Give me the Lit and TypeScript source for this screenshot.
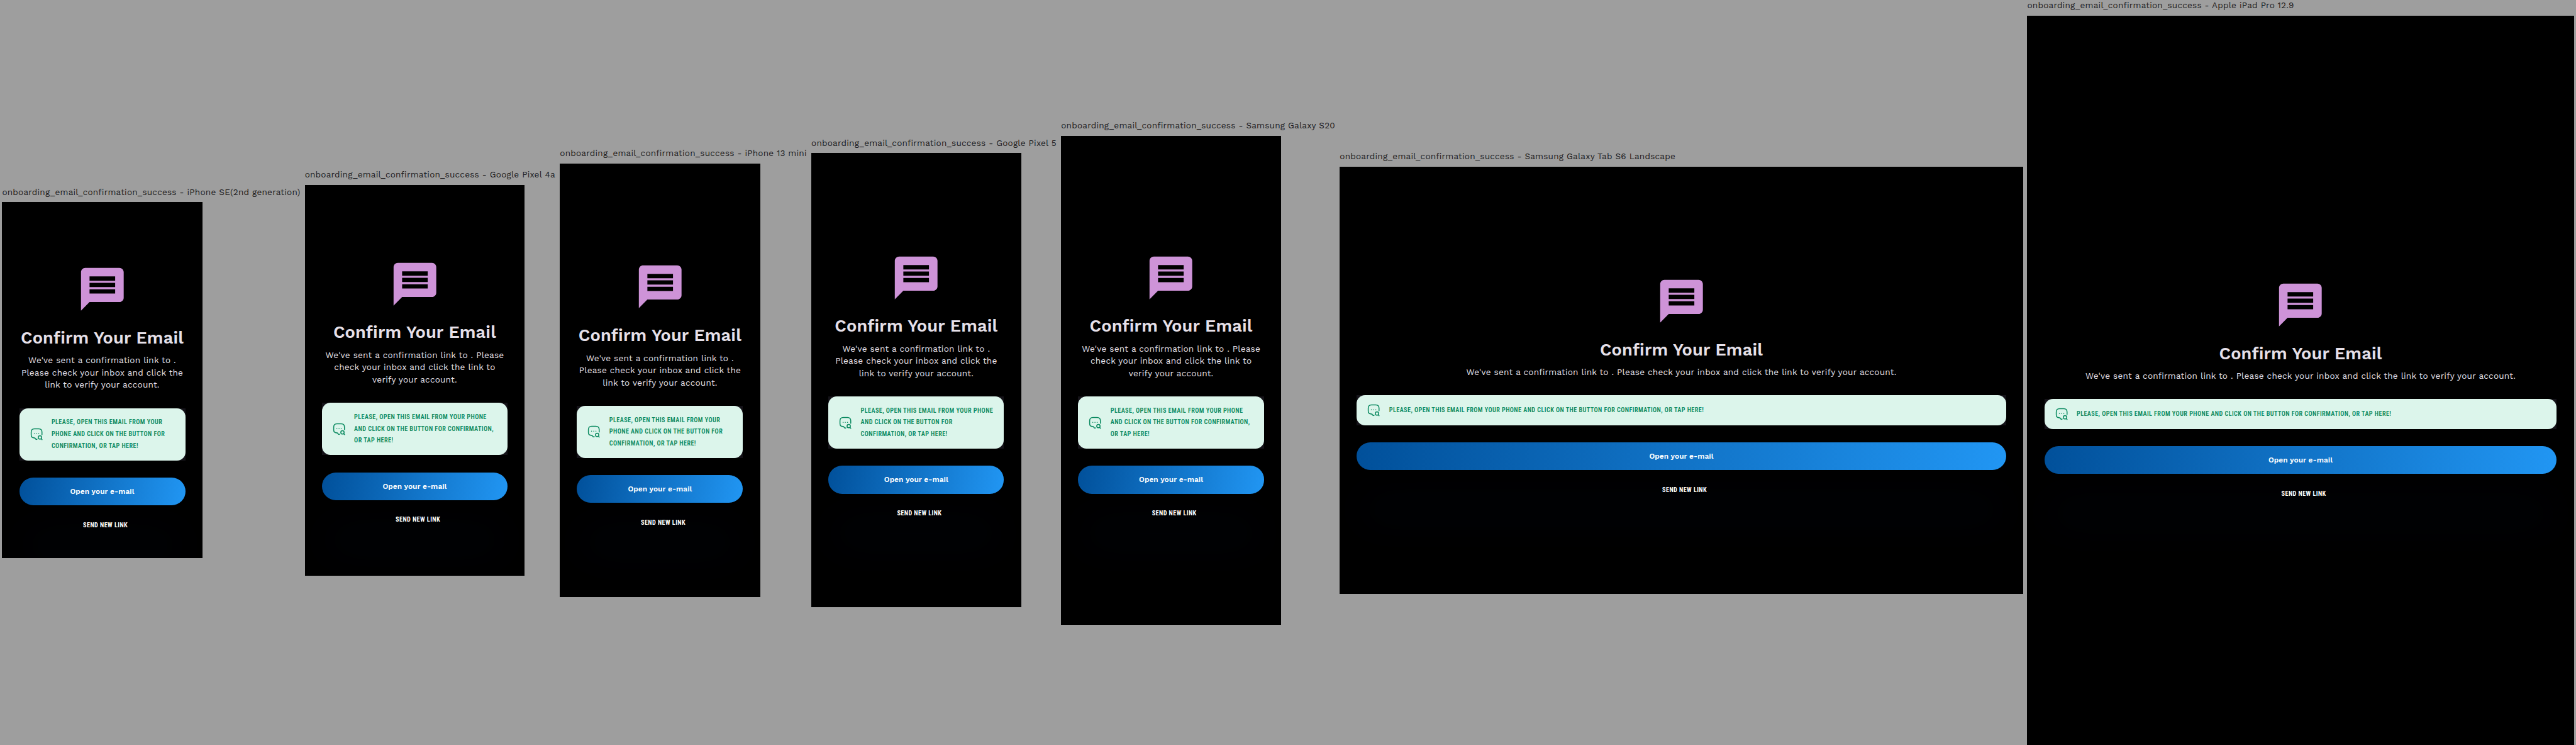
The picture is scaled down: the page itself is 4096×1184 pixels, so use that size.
import { LitElement, html, css, svg } from "lit";
import { customElement, property } from "lit/decorators.js";
import { classMap } from "lit/directives/class-map.js";
import { styleMap } from "lit/directives/style-map.js";

interface Device {
  name: string;
  slot: number;
  width: number;
  height: number;
  top: number;
  body: string[];
  notice: string[];
}

const BODY_NARROW = ["We've sent a confirmation link to .", "Please check your inbox and click the", "link to verify your account."];
const BODY_WIDE = ["We've sent a confirmation link to . Please", "check your inbox and click the link to", "verify your account."];
const BODY_LINE = ["We've sent a confirmation link to . Please check your inbox and click the link to verify your account."];
const NOTICE_NARROW = ["Please, open this email from your", "phone and click on the button for", "confirmation, or tap here!"];
const NOTICE_MEDIUM = ["Please, open this email from your phone", "and click on the button for", "confirmation, or tap here!"];
const NOTICE_WIDE = ["Please, open this email from your phone", "and click on the button for confirmation,", "or tap here!"];
const NOTICE_LINE = ["Please, open this email from your phone and click on the button for confirmation, or tap here!"];

const DEVICES: Device[] = [
  { name: "iPhone SE(2nd generation)", slot: 567, width: 375, height: 667, top: 115.5, body: BODY_NARROW, notice: NOTICE_NARROW },
  { name: "Google Pixel 4a", slot: 478, width: 412, height: 732, top: 138, body: BODY_WIDE, notice: NOTICE_WIDE },
  { name: "iPhone 13 mini", slot: 471, width: 375, height: 812, top: 183.5, body: BODY_NARROW, notice: NOTICE_NARROW },
  { name: "Google Pixel 5", slot: 468, width: 393, height: 851, top: 185.5, body: BODY_NARROW, notice: NOTICE_MEDIUM },
  { name: "Samsung Galaxy S20", slot: 522, width: 412, height: 915, top: 217.5, body: BODY_WIDE, notice: NOTICE_WIDE },
  { name: "Samsung Galaxy Tab S6 Landscape", slot: 1288, width: 1280, height: 800, top: 204, body: BODY_LINE, notice: NOTICE_LINE },
  { name: "Apple iPad Pro 12.9", slot: 1028, width: 1024, height: 1366, top: 494, body: BODY_LINE, notice: NOTICE_LINE },
];

const SIDE_PADDING = 32;
const BUTTON_HEIGHT = 52;

/** Angle of the button's diagonal, so that the colour runs from corner to corner. */
const gradientAngle = (width: number) =>
  90 + (Math.atan2(BUTTON_HEIGHT, width - 2 * SIDE_PADDING) * 180) / Math.PI;

const messageIcon = svg`<path fill="#ce93d8" d="M20 2H4c-1.1 0-1.99.9-1.99 2L2 22l4-4h14c1.1 0 2-.9 2-2V4c0-1.1-.9-2-2-2zm-2 12H6v-2h12v2zm0-3H6V9h12v2zm0-3H6V6h12v2z"/>`;

const searchIcon = svg`
  <g fill="none" stroke="#0b8a60" stroke-width="1.8" stroke-linecap="round" stroke-linejoin="round">
    <path d="M22.1 12.6V8c0-4.2-2-6.2-6.2-6.2H8.1C3.9 1.8 1.9 3.8 1.9 8v5.2c0 4.2 1.7 5.4 5.6 5.5.9 0 1.5.3 2 1l.9 1.2c.7.9 1.6 1 2.5.3"/>
    <circle cx="18.3" cy="17.9" r="3.1"/>
    <path d="M20.7 20.4l1.5 1.7"/>
  </g>
  <g fill="#0b8a60"><circle cx="7.8" cy="10.9" r=".95"/><circle cx="11.9" cy="10.9" r=".95"/><circle cx="16" cy="10.9" r=".95"/></g>`;

const lines = (parts: string[]) => parts.map((part) => html`<span class="line">${part}</span>`);

@customElement("device-frame")
export class DeviceFrame extends LitElement {
  @property({ attribute: false }) device!: Device;

  static styles = css`
    :host { display: flex; flex-direction: column; align-items: flex-start; justify-content: center; height: 1395px; }
    .label { height: 29px; font: 400 16px/19px "Work Sans", Inter, sans-serif; letter-spacing: 0.25px; color: #1c1b1d; white-space: nowrap; }
    .screen { box-sizing: border-box; padding: 0 32px; background: #000; overflow: hidden; display: flex; flex-direction: column; text-align: center; }
    .hero { display: block; width: 96px; height: 96px; flex: none; align-self: center; }
    .title { margin: 25px 0 0; font: 600 32px/37.5px "Work Sans", Inter, sans-serif; letter-spacing: 0.2px; color: #e6e0e9; white-space: nowrap; }
    .body { margin: 11.4px 0 0; font: 400 16px/23px "Work Sans", Inter, sans-serif; letter-spacing: 0.24px; color: #e6e0e9; }
    .line { display: block; white-space: nowrap; }
    .notice { margin-top: 31.6px; background: #141218; }
    .card { display: flex; align-items: center; gap: 16.5px; padding: 16px 20px; background: #dcf5eb; border-radius: 16px; text-align: left; }
    .search { display: block; width: 24px; height: 24px; flex: none; }
    .copy { font: 600 12px/22px Roboto, sans-serif; font-stretch: 75%; letter-spacing: 0.5px; text-transform: uppercase; color: #0b8a60; }
    .copy.single { padding: 1px 0; }
    .open { margin: 32px 0 0; height: 52px; flex: none; border: 0; border-radius: 26px; background: linear-gradient(var(--angle), #01509a, #2196f3); box-shadow: 0 100px 80px rgba(33, 100, 243, 0.03); font: 600 14px/52px "Work Sans", Inter, sans-serif; letter-spacing: 0.04px; color: #fff; text-align: center; padding: 0; }
    .resend { margin-top: 27.5px; padding-left: 12px; font: 700 12px/20px Roboto, sans-serif; font-stretch: 75%; letter-spacing: 0.5px; color: #fff; text-transform: uppercase; }
  `;

  render() {
    const d = this.device;
    const size = {
      "--angle": `${gradientAngle(d.width)}deg`,
      width: `${d.width}px`,
      height: `${d.height}px`,
      paddingTop: `${d.top}px`,
    };
    return html`
      <div class="label">onboarding_email_confirmation_success - ${d.name}</div>
      <div class="screen" style=${styleMap(size)}>
        <svg class="hero" viewBox="0 0 24 24">${messageIcon}</svg>
        <h1 class="title">Confirm Your Email</h1>
        <p class="body">${lines(d.body)}</p>
        <div class="notice">
          <div class="card">
            <svg class="search" viewBox="0 0 24 24">${searchIcon}</svg>
            <div class=${classMap({ copy: true, single: d.notice.length === 1 })}>${lines(d.notice)}</div>
          </div>
        </div>
        <button class="open">Open your e-mail</button>
        <div class="resend">Send new link</div>
      </div>
    `;
  }
}

@customElement("app-root")
export class AppRoot extends LitElement {
  static styles = css`
    :host { display: block; width: 4096px; height: 1184px; overflow: hidden; background: #9e9e9e; }
    .canvas { zoom: 0.84874; display: flex; box-sizing: border-box; width: 4826px; height: 1395px; padding-left: 4px; }
    .slot { flex: none; }
  `;

  render() {
    return html`
      <div class="canvas">
        ${DEVICES.map((d) => html`<device-frame class="slot" style=${styleMap({ width: `${d.slot}px` })} .device=${d}></device-frame>`)}
      </div>
    `;
  }
}
